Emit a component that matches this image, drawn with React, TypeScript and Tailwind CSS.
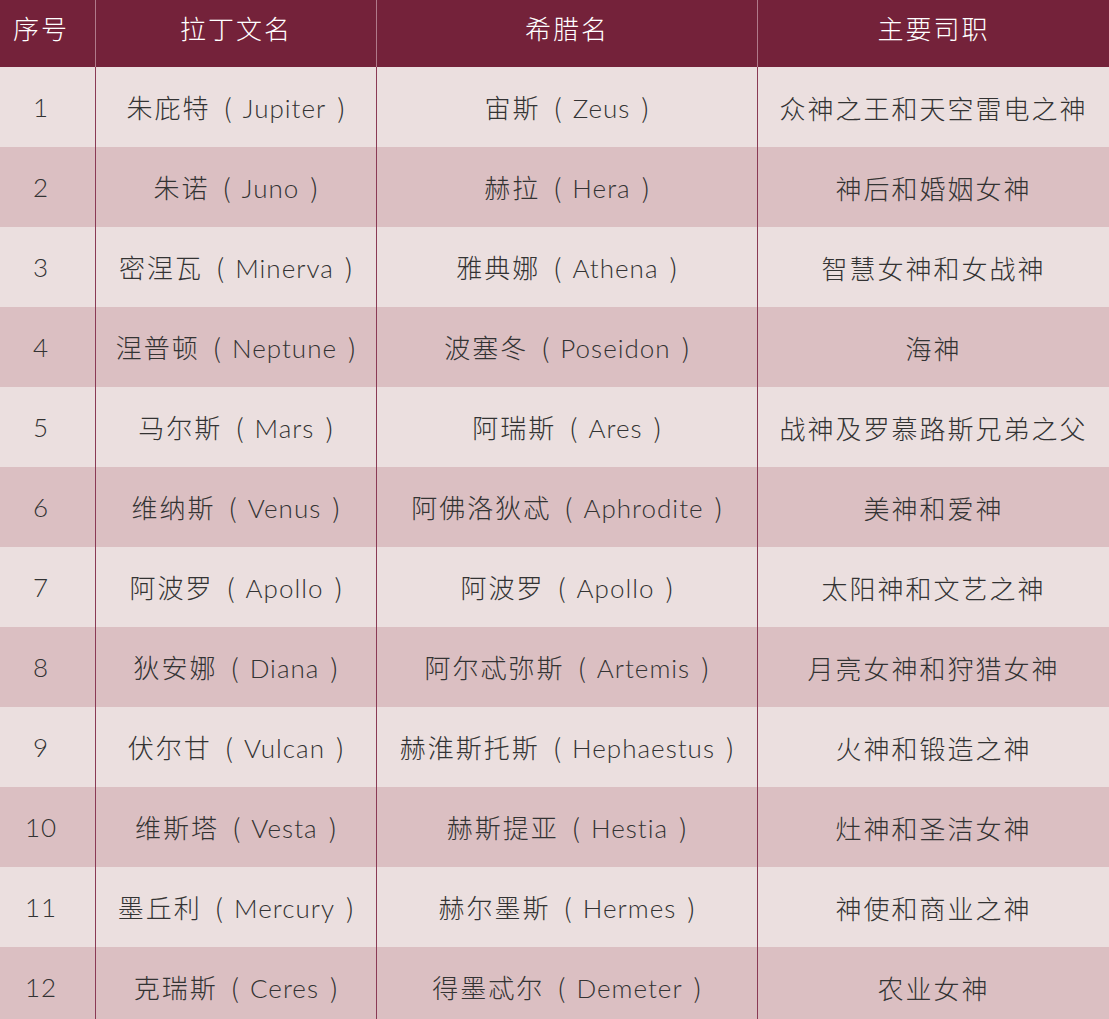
import React from 'react';

type Name = [string, string];

const rows: { no: string; latin: Name; greek: Name; role: string }[] = [
  { no: '1', latin: ['朱庇特', 'Jupiter'], greek: ['宙斯', 'Zeus'], role: '众神之王和天空雷电之神' },
  { no: '2', latin: ['朱诺', 'Juno'], greek: ['赫拉', 'Hera'], role: '神后和婚姻女神' },
  { no: '3', latin: ['密涅瓦', 'Minerva'], greek: ['雅典娜', 'Athena'], role: '智慧女神和女战神' },
  { no: '4', latin: ['涅普顿', 'Neptune'], greek: ['波塞冬', 'Poseidon'], role: '海神' },
  { no: '5', latin: ['马尔斯', 'Mars'], greek: ['阿瑞斯', 'Ares'], role: '战神及罗慕路斯兄弟之父' },
  { no: '6', latin: ['维纳斯', 'Venus'], greek: ['阿佛洛狄忒', 'Aphrodite'], role: '美神和爱神' },
  { no: '7', latin: ['阿波罗', 'Apollo'], greek: ['阿波罗', 'Apollo'], role: '太阳神和文艺之神' },
  { no: '8', latin: ['狄安娜', 'Diana'], greek: ['阿尔忒弥斯', 'Artemis'], role: '月亮女神和狩猎女神' },
  { no: '9', latin: ['伏尔甘', 'Vulcan'], greek: ['赫淮斯托斯', 'Hephaestus'], role: '火神和锻造之神' },
  { no: '10', latin: ['维斯塔', 'Vesta'], greek: ['赫斯提亚', 'Hestia'], role: '灶神和圣洁女神' },
  { no: '11', latin: ['墨丘利', 'Mercury'], greek: ['赫尔墨斯', 'Hermes'], role: '神使和商业之神' },
  { no: '12', latin: ['克瑞斯', 'Ceres'], greek: ['得墨忒尔', 'Demeter'], role: '农业女神' },
];

const cols = 'grid grid-cols-[95px_281px_381px_1fr]';
const latinFont = { fontFamily: 'Lato, "Noto Sans", sans-serif' };

// 中文名 ( Latin )
const NameCell = ({ name }: { name: Name }) => (
  <span className="whitespace-nowrap">
    <span className="tracking-[2px]">{name[0]}</span>
    <span className="ml-[13px] mr-[11px] font-extralight">(</span>
    <span style={latinFont} className="font-light tracking-[1px]">{name[1]}</span>
    <span className="ml-[11px] font-extralight">)</span>
  </span>
);

export default function App() {
  return (
    <div
      className="w-[1109px] h-[1019px] overflow-hidden bg-[#ebdfdf] text-[26px] font-light"
      style={{ fontFamily: '"Noto Sans CJK SC", "Noto Sans", sans-serif' }}
    >
      {/* Header */}
      <div className={`${cols} h-[67px] bg-[#74223a] text-white tracking-[2px]`}>
        <div className="flex items-center justify-center pr-[13px] pb-[12px]">序号</div>
        <div className="flex items-center justify-center border-l border-[#b07a8a] pb-[12px]">拉丁文名</div>
        <div className="flex items-center justify-center border-l border-[#b07a8a] pb-[12px]">希腊名</div>
        <div className="flex items-center justify-center border-l border-[#b07a8a] pb-[12px]">主要司职</div>
      </div>

      {/* Body */}
      {rows.map((r, i) => (
        <div
          key={r.no}
          className={`${cols} h-[80px] text-[#333333] ${i % 2 === 0 ? 'bg-[#ebdfdf]' : 'bg-[#dbbfc2]'}`}
        >
          <div style={latinFont} className="flex items-center justify-center pr-[13px] font-light tracking-[1px]">
            {r.no}
          </div>
          <div className="flex items-center justify-center border-l border-[#8a3a55]">
            <NameCell name={r.latin} />
          </div>
          <div className="flex items-center justify-center border-l border-[#8a3a55]">
            <NameCell name={r.greek} />
          </div>
          <div className="flex items-center justify-center border-l border-[#8a3a55] whitespace-nowrap tracking-[2px]">
            {r.role}
          </div>
        </div>
      ))}
    </div>
  );
}
